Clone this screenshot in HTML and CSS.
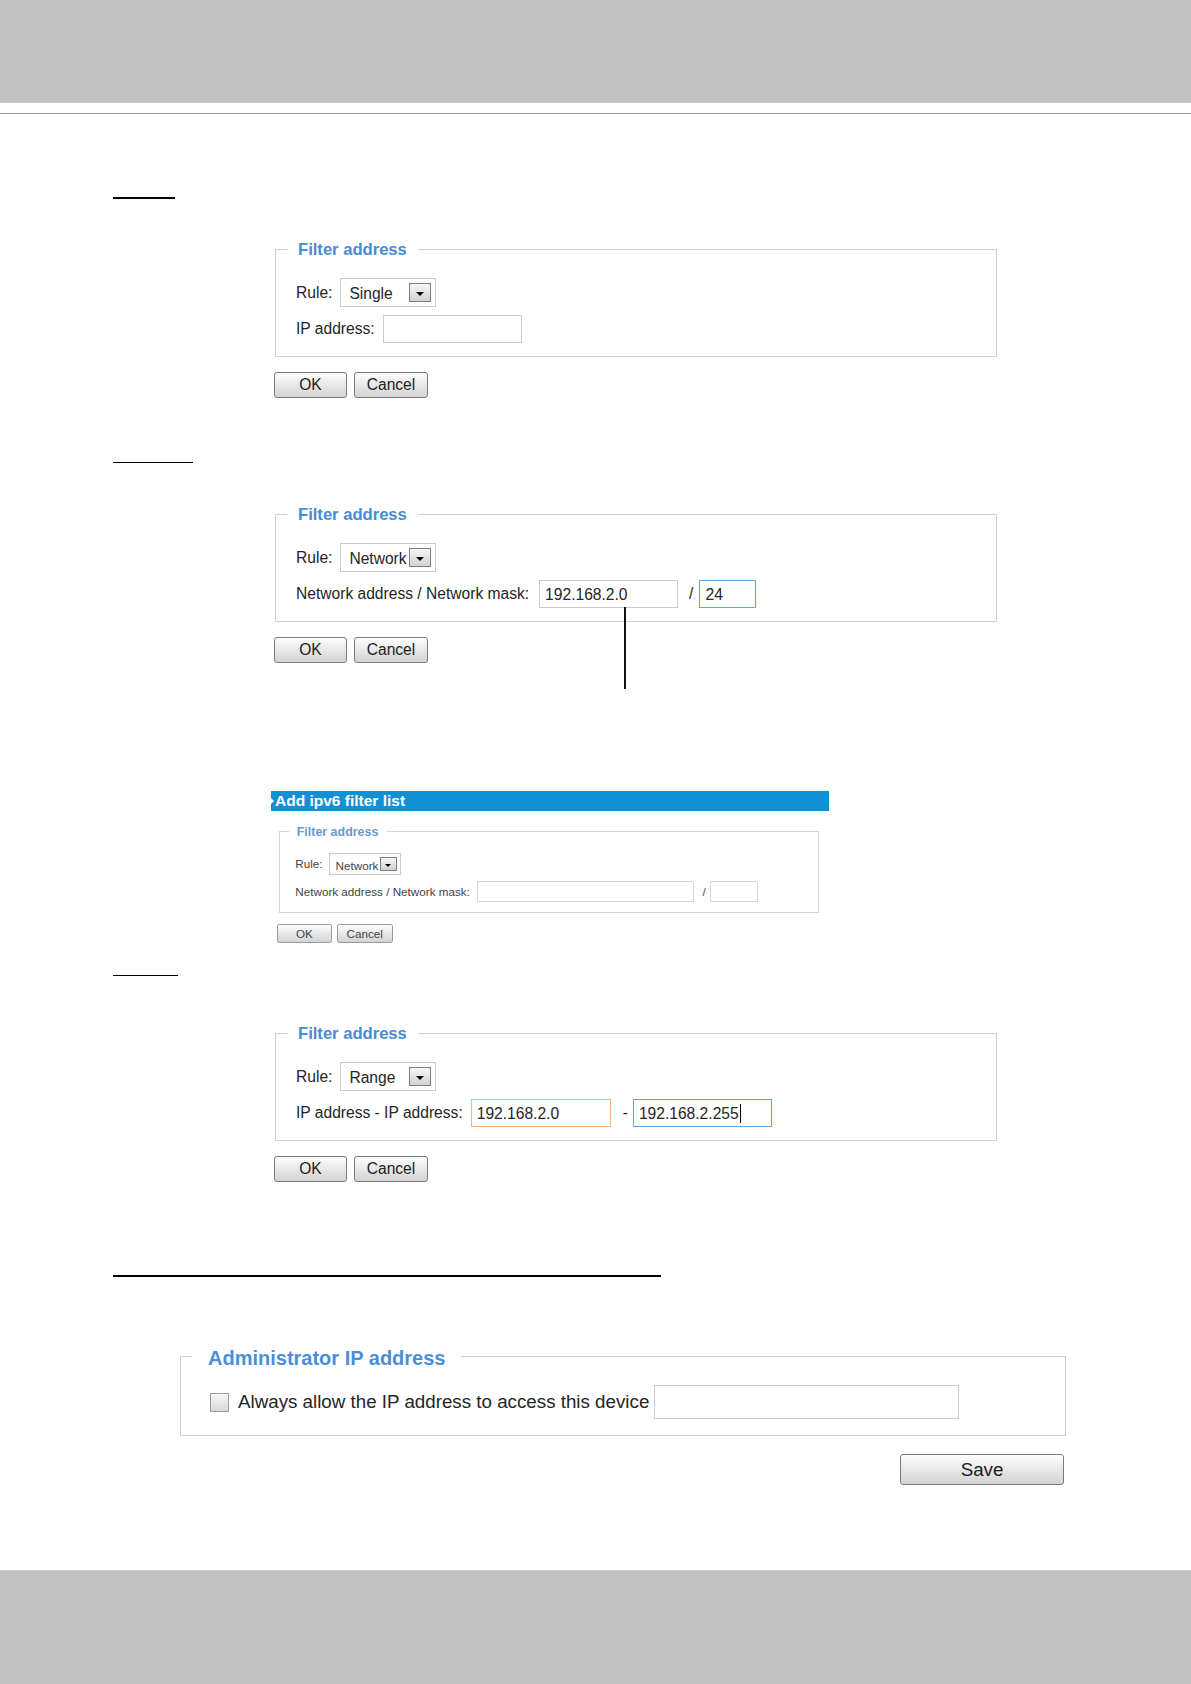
FILE: index.html
```html
<!DOCTYPE html>
<html lang="en">
<head>
<meta charset="utf-8">
<title>Filter address</title>
<link rel="stylesheet" href="styles.css">
</head>
<body>
<div class="page">
  <header class="topbar"></header>
  <div class="topline"></div>

  <main class="content">
    <div class="heading heading--1"></div>
    <section class="panel panel--1">
      <fieldset class="fs">
        <legend class="fs-legend">Filter address</legend>
        <div class="row">
          <span class="lbl">Rule:</span>
          <div class="select"><span class="select-text">Single</span><span class="select-btn"></span></div>
        </div>
        <div class="row">
          <span class="lbl">IP address:</span>
          <span class="input input--ip"></span>
        </div>
      </fieldset>
      <div class="btns"><button class="btn btn--ok">OK</button><button class="btn btn--cancel">Cancel</button></div>
    </section>

    <div class="heading heading--2"></div>
    <section class="panel panel--2">
      <fieldset class="fs">
        <legend class="fs-legend">Filter address</legend>
        <div class="row">
          <span class="lbl">Rule:</span>
          <div class="select"><span class="select-text">Network</span><span class="select-btn"></span></div>
        </div>
        <div class="row">
          <span class="lbl lbl--wide">Network address / Network mask:</span>
          <span class="input input--net">192.168.2.0</span>
          <span class="sep sep--slash">/</span>
          <span class="input input--mask">24</span>
        </div>
      </fieldset>
      <div class="btns"><button class="btn btn--ok">OK</button><button class="btn btn--cancel">Cancel</button></div>
    </section>

    <section class="shot">
      <div class="shot-bar">Add ipv6 filter list</div>
      <div class="shot-body">
        <fieldset class="fs fs--mini">
          <legend class="fs-legend">Filter address</legend>
          <div class="row">
            <span class="lbl">Rule:</span>
            <div class="select"><span class="select-text">Network</span><span class="select-btn"></span></div>
          </div>
          <div class="row">
            <span class="lbl lbl--wide">Network address / Network mask:</span>
            <span class="input input--mininet"></span>
            <span class="sep sep--slash">/</span>
            <span class="input input--minimask"></span>
          </div>
        </fieldset>
        <div class="btns btns--mini"><button class="btn btn--ok">OK</button><button class="btn btn--cancel">Cancel</button></div>
      </div>
    </section>

    <div class="heading heading--3"></div>
    <section class="panel panel--3">
      <fieldset class="fs">
        <legend class="fs-legend">Filter address</legend>
        <div class="row">
          <span class="lbl">Rule:</span>
          <div class="select"><span class="select-text">Range</span><span class="select-btn"></span></div>
        </div>
        <div class="row">
          <span class="lbl">IP address - IP address:</span>
          <span class="input input--from">192.168.2.0</span>
          <span class="sep sep--dash">-</span>
          <span class="input input--to">192.168.2.255<span class="caret"></span></span>
        </div>
      </fieldset>
      <div class="btns"><button class="btn btn--ok">OK</button><button class="btn btn--cancel">Cancel</button></div>
    </section>

    <div class="heading heading--4"></div>
    <section class="admin">
      <fieldset class="fs fs--admin">
        <legend class="fs-legend">Administrator IP address</legend>
        <div class="row row--admin">
          <span class="check"></span>
          <span class="lbl lbl--admin">Always allow the IP address to access this device</span>
          <span class="input input--admin"></span>
        </div>
      </fieldset>
      <div class="save-row"><button class="btn btn--save">Save</button></div>
    </section>
  </main>

  <footer class="footer"></footer>
</div>
</body>
</html>
```

FILE: styles.css
```css
* {
  box-sizing: border-box;
}

html,
body {
  margin: 0;
  padding: 0;
  background: #fff;
}

body {
  font-family: "Liberation Sans", Arial, sans-serif;
  color: #222;
}

.page {
  display: flex;
  flex-direction: column;
  min-height: 1684px;
}

.topbar {
  height: 103px;
  background: #c0c0c0;
  border-bottom: 1px solid #cbcbcb;
}

.topline {
  margin-top: 10px;
  height: 1px;
  background: #9a9a9a;
}

.content {
  padding-left: 113px;
  display: flex;
  flex-direction: column;
  align-items: flex-start;
}

/* blank underlined headings */
.heading {
  background: #000;
}
.heading--1 { margin-top: 83px; width: 62px; height: 2px; }
.heading--2 { margin-top: 64px; width: 80px; height: 1px; }
.heading--3 { margin-top: 32px; width: 65px; height: 1px; }
.heading--4 { margin-top: 93px; width: 548px; height: 2px; }

.panel {
  margin-left: 162px;
}
.panel--1 { margin-top: 39px; }
.panel--2 { margin-top: 40px; }
.panel--3 { margin-top: 46px; }

/* fieldset */
.fs {
  margin: 0;
  min-width: 0;
  width: 722px;
  border: 1px solid #cfcfcf;
  padding: 18px 20px 13px;
}

.fs-legend {
  margin-left: -9px;
  padding: 2px 11px 0;
  font-size: 16.6px;
  line-height: 20px;
  font-weight: bold;
  color: #468cd2;
}

.row {
  display: flex;
  align-items: center;
  font-size: 15.6px;
  color: #252525;
}
.row + .row {
  margin-top: 8px;
}

.lbl {
  margin-right: 8px;
  white-space: nowrap;
}
.lbl--wide {
  margin-right: 10px;
}

/* select */
.select {
  width: 96px;
  height: 29px;
  border: 1px solid #cbcbcb;
  background: #fff;
  display: flex;
  align-items: center;
  justify-content: space-between;
  padding: 0 4px 0 8px;
}
.select-text {
  padding-top: 3px;
}
.select-btn {
  width: 22px;
  height: 19px;
  border: 1px solid #7d7d7d;
  background: linear-gradient(#f6f6f6, #d2d2d2);
  display: flex;
  align-items: center;
  justify-content: center;
  padding-top: 3px;
}
.select-btn::before {
  content: "";
  border-left: 4px solid transparent;
  border-right: 4px solid transparent;
  border-top: 4px solid #000;
}

/* text inputs */
.input {
  height: 28px;
  border: 1px solid #c9cdd2;
  background: #fff;
  display: flex;
  align-items: center;
  padding: 1px 5px 0;
  font-size: 15.6px;
  white-space: nowrap;
}
.input--ip { width: 139px; }
.input--net {
  width: 139px;
  position: relative;
}
.input--net::after {
  content: "";
  position: absolute;
  left: 84px;
  top: 100%;
  width: 2px;
  height: 82px;
  background: #111;
}
.input--mask {
  width: 57px;
  border-color: #5ea6dc;
}
.input--from {
  width: 140px;
  border-color: #f0b37e;
}
.input--to {
  width: 139px;
  border-color: #5ea6dc;
}
.caret {
  display: inline-block;
  width: 1px;
  height: 19px;
  background: #000;
  margin-left: 1px;
}

.sep--slash { margin: 0 6px 0 11px; }
.sep--dash { margin: 0 5px 0 12px; }

/* buttons */
.btns {
  display: flex;
  gap: 7px;
  margin-top: 15px;
  margin-left: -1px;
}
.btn {
  height: 26px;
  padding: 0;
  border: 1px solid #7a7a7a;
  border-radius: 3px;
  background: linear-gradient(#fdfdfd, #e8e8e8 50%, #d3d3d3);
  font-family: "Liberation Sans", Arial, sans-serif;
  font-size: 15.6px;
  color: #1c1c1c;
}
.btn--ok { width: 73px; }
.btn--cancel { width: 74px; }

/* small ipv6 screenshot */
.shot {
  margin-top: 128px;
  margin-left: 158px;
  width: 558px;
}
.shot-bar {
  height: 20px;
  background: #1190d6;
  color: #fff;
  font-weight: bold;
  font-size: 15.5px;
  line-height: 20px;
  display: flex;
  align-items: center;
  gap: 1px;
}
.shot-bar::before {
  content: "";
  border-top: 3px solid transparent;
  border-bottom: 3px solid transparent;
  border-left: 3px solid #fff;
}
.shot-body {
  zoom: 0.75;
  padding-left: 11px;
}
.fs--mini {
  margin-top: 16px;
  width: 720px;
  border-color: #d6d6d6;
}
.fs--mini .fs-legend {
  color: #6f95d0;
}
.fs--mini .row {
  color: #444;
}
.input--mininet {
  width: 289px;
  border-color: #d3d6da;
}
.input--minimask {
  width: 64px;
  border-color: #d3d6da;
}
.btns--mini {
  margin-left: -3px;
}
.btns--mini .btn {
  color: #444;
  border-color: #999;
}

/* administrator */
.admin {
  margin-top: 65px;
  margin-left: 67px;
}
.fs--admin {
  width: 886px;
  padding: 15px 29px 16px;
}
.fs--admin .fs-legend {
  margin-left: -18px;
  padding: 4px 16px 0;
  font-size: 20px;
  line-height: 24px;
  color: #4a8fd6;
}
.row--admin {
  font-size: 18.75px;
}
.check {
  width: 19px;
  height: 19px;
  border: 1px solid #9b9b9b;
  background: linear-gradient(#f7f7f7, #d8d8d8);
  margin-right: 9px;
}
.lbl--admin {
  margin-right: 5px;
}
.input--admin {
  width: 305px;
  height: 34px;
}
.save-row {
  margin-top: 18px;
  width: 884px;
  display: flex;
  justify-content: flex-end;
}
.btn--save {
  width: 164px;
  height: 31px;
  font-size: 18.75px;
}

.footer {
  margin-top: auto;
  height: 114px;
  background: #c0c0c0;
  border-top: 1px solid #cfcfcf;
}
```
